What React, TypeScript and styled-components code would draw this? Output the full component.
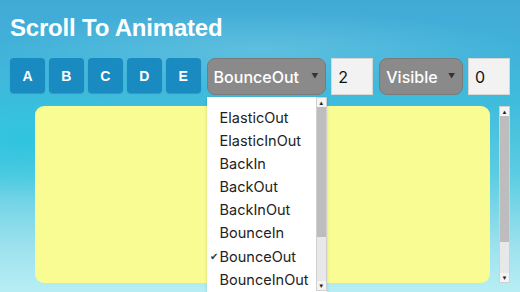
import React from 'react';
import styled, { createGlobalStyle } from 'styled-components';

const easings = ['ElasticOut', 'ElasticInOut', 'BackIn', 'BackOut', 'BackInOut', 'BounceIn', 'BounceOut', 'BounceInOut'];
const letters = ['A', 'B', 'C', 'D', 'E'];

const GlobalStyle = createGlobalStyle`
  html, body {
    margin: 0;
    padding: 0;
    width: 520px;
    height: 292px;
    overflow: hidden;
  }
  body {
    background:
      radial-gradient(ellipse 120px 60px at 20px 140px, rgba(40, 196, 222, 0.8), transparent),
      radial-gradient(ellipse 260px 40px at 260px 50px, rgba(150, 215, 235, 0.35), transparent),
      linear-gradient(180deg, #42a9d6 0%, #3fbcdc 35%, #5ccde2 60%, #9ee2ee 85%, #b7eef5 100%);
    font-family: "Liberation Sans", Arial, sans-serif;
  }
`;

const Page = styled.div`
  padding: 0 10px;
`;

const Title = styled.h1`
  margin: 0;
  padding-top: 14px;
  font-size: 24px;
  line-height: 28px;
  font-weight: 700;
  color: #ffffff;
  letter-spacing: -0.2px;
`;

const Toolbar = styled.div`
  display: flex;
  align-items: flex-start;
  margin-top: 16px;
`;

const LetterButton = styled.button`
  width: 35px;
  height: 35px;
  margin-right: 4px;
  border: none;
  border-radius: 4px;
  background: #1a8bc0;
  color: #ffffff;
  font-family: "Liberation Sans", Arial, sans-serif;
  font-size: 14px;
  font-weight: 700;
  padding: 0;
  box-shadow: 0 1px 1px rgba(0, 60, 100, 0.25);
`;

const SelectWrap = styled.div<{ $w: number; $gap: number }>`
  position: relative;
  width: ${p => p.$w}px;
  margin-left: ${p => p.$gap}px;
`;

const SelectBox = styled.div`
  height: 37px;
  border-radius: 8px;
  background: #8a8a8a;
  border: 1px solid #7a7a7a;
  box-sizing: border-box;
  display: flex;
  align-items: center;
  padding: 0 6px;
  color: #ffffff;
  font-family: Inter, "Noto Sans", sans-serif;
  font-size: 16px;
  font-weight: 500;
`;

const SelectLabel = styled.span`
  flex: 1;
`;

const Caret = styled.span`
  font-size: 7px;
  color: #333;
  margin-right: 1px;
`;

const NumberBox = styled.div`
  width: 42px;
  height: 37px;
  margin-left: 5px;
  background: #f2f2f2;
  border: 1px solid #d6d6d6;
  box-sizing: border-box;
  display: flex;
  align-items: center;
  padding-left: 6px;
  font-family: Inter, "Noto Sans", sans-serif;
  font-size: 16px;
  color: #111;
`;

const DropList = styled.div`
  position: absolute;
  top: 39px;
  left: 0;
  width: 120px;
  height: 200px;
  background: #ffffff;
  display: flex;
  box-shadow: 0 1px 3px rgba(0, 0, 0, 0.15);
  z-index: 2;
`;

const Items = styled.ul`
  flex: 1;
  list-style: none;
  margin: 0;
  padding: 9px 0 0 0;
`;

const Item = styled.li`
  position: relative;
  height: 23.1px;
  line-height: 23.1px;
  padding-left: 13px;
  font-family: Inter, "Noto Sans", sans-serif;
  font-size: 14.5px;
  color: #222;
`;

const Check = styled.span`
  position: absolute;
  left: 3px;
  top: 0;
  font-size: 10px;
  color: #333;
`;

const Scrollbar = styled.div<{ $h: number }>`
  width: 11px;
  height: ${p => p.$h}px;
  display: flex;
  flex-direction: column;
  background: #e8e8e8;
  border: 1px solid #d0d0d0;
  box-sizing: border-box;
`;

const Arrow = styled.div`
  height: 9px;
  background: #f4f4f4;
  display: flex;
  align-items: center;
  justify-content: center;
  font-size: 6px;
  color: #222;
  line-height: 1;
`;

const Thumb = styled.div<{ $h: number }>`
  height: ${p => p.$h}px;
  background: #bdbdbd;
`;

const Track = styled.div`
  flex: 1;
`;

const Content = styled.div`
  display: flex;
  align-items: flex-start;
  margin-top: 11px;
  padding-left: 25px;
`;

const Panel = styled.div`
  width: 458px;
  height: 177px;
  border-radius: 9px;
  background: #f8fc92;
`;

const SideBar = styled.div`
  margin-left: 9px;
`;

const App = () => {
  return (
    <>
      <GlobalStyle />
      <Page>
        <Title>Scroll To Animated</Title>
        <Toolbar>
          {letters.map(l => (
            <LetterButton key={l}>{l}</LetterButton>
          ))}
          <SelectWrap $w={120} $gap={2}>
            <SelectBox>
              <SelectLabel>BounceOut</SelectLabel>
              <Caret>▼</Caret>
            </SelectBox>
            <DropList>
              <Items>
                {easings.map(e => (
                  <Item key={e}>
                    {e === 'BounceOut' && <Check>✔</Check>}
                    {e}
                  </Item>
                ))}
              </Items>
              <Scrollbar $h={194}>
                <Arrow>▲</Arrow>
                <Thumb $h={130} />
                <Track />
                <Arrow>▼</Arrow>
              </Scrollbar>
            </DropList>
          </SelectWrap>
          <NumberBox>2</NumberBox>
          <SelectWrap $w={84} $gap={6}>
            <SelectBox>
              <SelectLabel>Visible</SelectLabel>
              <Caret>▼</Caret>
            </SelectBox>
          </SelectWrap>
          <NumberBox>0</NumberBox>
        </Toolbar>
        <Content>
          <Panel />
          <SideBar>
            <Scrollbar $h={177}>
              <Arrow>▲</Arrow>
              <Thumb $h={126} />
              <Track />
              <Arrow>▼</Arrow>
            </Scrollbar>
          </SideBar>
        </Content>
      </Page>
    </>
  );
};

export default App;
